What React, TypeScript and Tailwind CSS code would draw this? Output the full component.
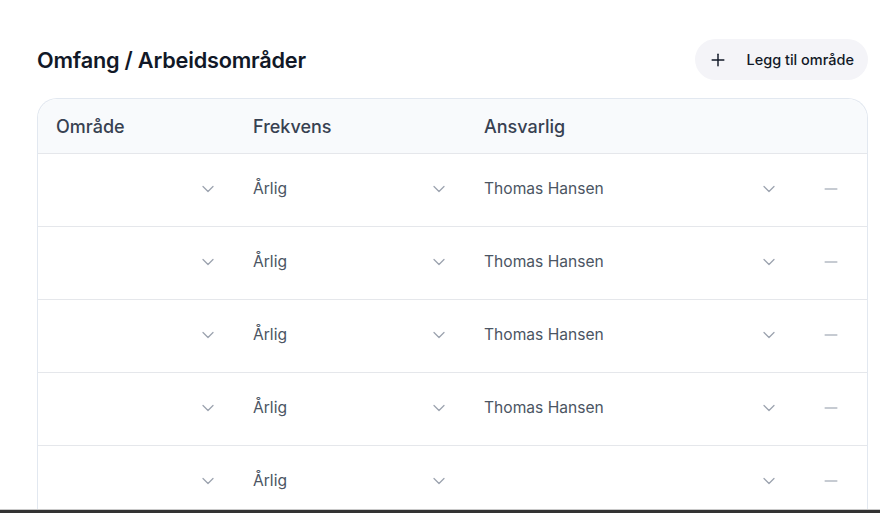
import React from 'react';
import { ChevronDown, Minus, Plus } from 'lucide-react';

type Row = { frekvens: string; ansvarlig: string };

const rows: Row[] = [
  { frekvens: 'Årlig', ansvarlig: 'Thomas Hansen' },
  { frekvens: 'Årlig', ansvarlig: 'Thomas Hansen' },
  { frekvens: 'Årlig', ansvarlig: 'Thomas Hansen' },
  { frekvens: 'Årlig', ansvarlig: 'Thomas Hansen' },
  { frekvens: 'Årlig', ansvarlig: '' },
];

const cols = 'grid grid-cols-[197px_231px_330px_1fr]';

function SelectCell({ value }: { value: string }) {
  return (
    <div className="flex items-center justify-between pl-[18px] pr-[17px]">
      <span className="text-[15.6px] leading-[22px] text-[#4b5563]">{value}</span>
      <ChevronDown size={20} strokeWidth={1.5} className="text-[#9ca3af]" />
    </div>
  );
}

export default function App() {
  return (
    <div
      className="h-[513px] w-[880px] flex flex-col overflow-hidden bg-white"
      style={{ fontFamily: 'Inter, "Noto Sans", sans-serif' }}
    >
      <div className="flex-1 overflow-hidden pl-[37px] pr-[12px] pt-[39px]">
        <div className="flex items-center justify-between">
          <h1 className="text-[21.7px] font-semibold text-[#111827] tracking-[-0.2px] pt-[1px]">
            Omfang / Arbeidsområder
          </h1>
          <button className="flex items-center gap-[18px] h-[41px] rounded-full bg-[#f4f4f8] pl-[13px] pr-[14px] text-[14.5px] font-medium text-[#111827]">
            <Plus size={20} strokeWidth={1.75} />
            Legg til område
          </button>
        </div>

        <div className="mt-[18px] rounded-t-[20px] border border-b-0 border-[#e2e8f0]">
          <div className={`${cols} h-[55px] items-center rounded-t-[20px] bg-[#f8fafc] border-b border-[#e5e7eb] pt-[1px] text-[18px] font-medium text-[#374151]`}>
            <div className="pl-[18px]">Område</div>
            <div className="pl-[18px]">Frekvens</div>
            <div className="pl-[18px]">Ansvarlig</div>
            <div />
          </div>
          {rows.map((r, i) => (
            <div key={i} className={`${cols} h-[73px] items-center border-b border-[#e5e7eb] pb-[2px]`}>
              <SelectCell value="" />
              <SelectCell value={r.frekvens} />
              <SelectCell value={r.ansvarlig} />
              <div className="flex justify-center pr-[2px]">
                <Minus size={20} strokeWidth={1.75} className="text-[#b4bac3]" />
              </div>
            </div>
          ))}
        </div>
      </div>
      <div className="h-[4px] border-t border-[#c9c9c9] bg-[#333333]" />
    </div>
  );
}
